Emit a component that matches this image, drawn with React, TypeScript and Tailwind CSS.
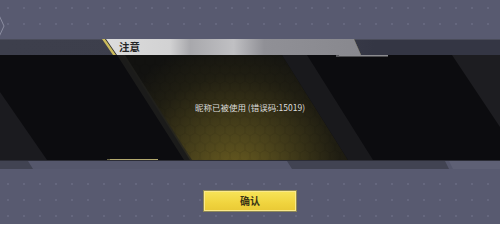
import React from 'react'

const font = { fontFamily: '"Noto Sans CJK SC", "Noto Sans", sans-serif' }

function PanelArt() {
  return (
    <svg className="absolute inset-0" width="500" height="105" viewBox="0 0 500 105">
      <defs>
        <radialGradient id="glow" cx="235" cy="125" r="140" gradientUnits="userSpaceOnUse">
          <stop offset="0" stopColor="#6e6020" />
          <stop offset="0.35" stopColor="#4a421b" />
          <stop offset="0.75" stopColor="#201e12" />
          <stop offset="1" stopColor="#121210" />
        </radialGradient>
        <pattern id="hex" width="10" height="17.3" patternUnits="userSpaceOnUse">
          <path d="M0 0 L5 2.9 L5 8.7 L0 11.5 M5 2.9 L10 0 M5 8.7 L10 11.5 L10 17.3 M0 11.5 L0 17.3" fill="none" stroke="#000" strokeWidth="0.5" opacity="0.18" />
        </pattern>
      </defs>
      <rect width="500" height="105" fill="#0c0c0f" />
      <polygon points="0,37 47,105 0,105" fill="#1b1b1f" />
      <polygon points="123,0 282,0 348,105 190,105" fill="url(#glow)" />
      <polygon points="123,0 282,0 348,105 190,105" fill="url(#hex)" />
      <polygon points="117,0 125,0 192,105 184,105" fill="#222220" opacity="0.7" />
      <polygon points="282,0 307,0 373,105 348,105" fill="#19191c" />
      <polygon points="452,0 500,0 500,72" fill="#1d1d21" />
      <rect x="336" y="0" width="52" height="1.5" fill="#8c8c90" />
      <rect x="336" y="0" width="3" height="1.5" fill="#5a5a5e" />
      <rect x="107" y="104" width="51" height="1.5" fill="#b3a96e" />
      <rect x="107" y="104" width="3" height="1.5" fill="#6a6545" />
    </svg>
  )
}

function StripArt() {
  return (
    <svg className="absolute inset-0" width="500" height="9" viewBox="0 0 500 9">
      <rect width="500" height="9" fill="#55576c" />
      <rect width="500" height="1" fill="#2b2c36" />
      <polygon points="0,1 28,1 33,9 0,9" fill="#414352" />
      <polygon points="287,1 445,1 449,9 292,9" fill="#414352" />
      <polygon points="449,1 500,1 500,9 453,9" fill="#5e6075" />
    </svg>
  )
}

export default function App() {
  return (
    <div
      className="relative w-[500px] h-[224px] overflow-hidden flex flex-col bg-[#585a70] bg-[radial-gradient(circle,#65677e_0.8px,transparent_1px)] bg-[length:16px_16px]"
      style={font}
    >
      {/* corner hexagon */}
      <svg className="absolute left-[-22px] top-[12px]" width="27" height="28" viewBox="0 0 27 28">
        <polygon points="7,1 20,1 26,14 20,27 7,27 1,14" fill="none" stroke="#8a8ca0" strokeWidth="1" />
      </svg>

      <div className="h-[39px] shrink-0" />

      {/* header */}
      <div className="relative h-[16px] shrink-0 flex bg-[linear-gradient(90deg,#3d3f4c_0%,#3c3e4b_60%,#343644_75%,#343644_100%)]">
        <div className="absolute inset-x-0 top-0 h-px bg-[#4a4c5a]" />
        <div className="ml-[102px] w-[259px] h-full bg-[#cbbb5c] [clip-path:polygon(0_0,252px_0,259px_100%,11px_100%)]">
          <div className="ml-[3px] h-full bg-[#2a2a2a] [clip-path:polygon(0_0,252px_0,259px_100%,11px_100%)]">
            <div className="ml-[1px] h-full flex items-center pl-[13px] bg-[linear-gradient(90deg,#dcdcdc_0%,#d2d2d3_25%,#a8a8ac_33%,#c0c0c3_50%,#909096_62%,#88888e_100%)] [clip-path:polygon(0_0,252px_0,259px_100%,11px_100%)]">
              <span className="text-[10.5px] leading-none font-bold text-[#262626]">注意</span>
            </div>
          </div>
        </div>
      </div>

      {/* message panel */}
      <div className="relative h-[105px] shrink-0 flex items-center justify-center">
        <PanelArt />
        <span className="relative text-[8.5px] leading-none text-[#dcdcdc]">昵称已被使用 (错误码:15019)</span>
      </div>

      <div className="relative h-[9px] shrink-0">
        <StripArt />
      </div>

      <div className="flex justify-center pt-[21px]">
        <button className="w-[94px] h-[22px] border border-[#8d8756] bg-[linear-gradient(180deg,#f7e45a_0%,#f0d43e_60%,#e9c935_100%)] flex items-center justify-center shadow-[inset_0_0_0_1px_#fbe98a]">
          <span className="text-[10px] leading-none font-bold text-[#3a3416]">确认</span>
        </button>
      </div>
    </div>
  )
}
